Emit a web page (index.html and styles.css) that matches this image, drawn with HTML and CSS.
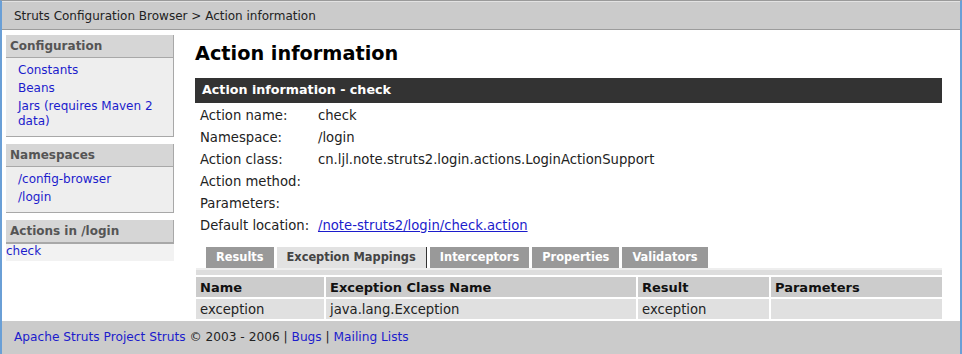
FILE: index.html
```html
<!DOCTYPE html>
<html lang="en">
<head>
  <meta charset="UTF-8" />
  <title>Action information</title>
  <link rel="stylesheet" href="styles.css">
</head>
<body>
<div class="frame">

  <!-- Breadcrumb -->
  <div class="top-bar">Struts Configuration Browser &gt; Action information</div>

  <div class="layout">
    <!-- Sidebar -->
    <div class="sidebar">
      <div class="nav-box">
        <div class="nav-title">Configuration</div>
        <ul class="nav-list">
          <li><a href="#">Constants</a></li>
          <li><a href="#">Beans</a></li>
          <li><a href="#">Jars (requires Maven 2 data)</a></li>
        </ul>
      </div>
      <div class="nav-box">
        <div class="nav-title">Namespaces</div>
        <ul class="nav-list">
          <li><a href="#">/config-browser</a></li>
          <li><a href="#">/login</a></li>
        </ul>
      </div>
      <div class="nav-box actions-box">
        <div class="nav-title">Actions in /login</div>
      </div>
      <div class="action-link"><a href="#">check</a></div>
    </div>

    <!-- Main -->
    <div class="main">
      <h2 class="page-heading">Action information</h2>
      <div class="section-bar">Action information - check</div>
      <table class="info-table">
        <tr><td class="label">Action name:</td><td>check</td></tr>
        <tr><td class="label">Namespace:</td><td>/login</td></tr>
        <tr><td class="label">Action class:</td><td>cn.ljl.note.struts2.login.actions.LoginActionSupport</td></tr>
        <tr><td class="label">Action method:</td><td></td></tr>
        <tr><td class="label">Parameters:</td><td></td></tr>
        <tr><td class="label">Default location:</td><td><a href="#" class="under">/note-struts2/login/check.action</a></td></tr>
      </table>

      <div class="tabs">
        <span class="tab">Results</span>
        <span class="tab active">Exception Mappings</span>
        <span class="tab">Interceptors</span>
        <span class="tab">Properties</span>
        <span class="tab">Validators</span>
      </div>
      <div class="tab-strip"></div>
      <table class="grid">
        <tr>
          <th class="c-name">Name</th>
          <th class="c-class">Exception Class Name</th>
          <th class="c-result">Result</th>
          <th>Parameters</th>
        </tr>
        <tr>
          <td>exception</td>
          <td>java.lang.Exception</td>
          <td>exception</td>
          <td></td>
        </tr>
      </table>
    </div>
  </div>

  <!-- Footer -->
  <div class="footer">
    <a href="#">Apache Struts Project Struts</a> &copy; 2003 - 2006 | <a href="#">Bugs</a> | <a href="#">Mailing Lists</a>
  </div>
</div>
</body>
</html>
```

FILE: styles.css
```css
/* Basic Reset */
* {
  margin: 0;
  padding: 0;
  box-sizing: border-box;
}
body {
  background-color: #fff;
  font-family: "DejaVu Sans", Verdana, sans-serif;
  font-size: 12px;
  color: #222;
}
a {
  color: #1c1ccc;
  text-decoration: none;
}
a.under {
  text-decoration: underline;
}
/* Window frame */
.frame {
  height: 354px;
  border-left: 2px solid #6a9fd6;
  border-right: 2px solid #6a9fd6;
  border-top: 1px solid #9a9a9a;
  display: flex;
  flex-direction: column;
}
/* Breadcrumb bar */
.top-bar {
  background-color: #cbcbcb;
  border-top: 1px solid #e2e2e2;
  border-bottom: 1px solid #9c9c9c;
  height: 29px;
  padding: 7px 0 0 12px;
  color: #222;
}
.layout {
  display: flex;
  flex: 1;
  padding: 4px 18px 0 4px;
}
/* Sidebar */
.sidebar {
  width: 168px;
  flex-shrink: 0;
  padding-top: 1px;
}
.nav-box {
  background-color: #eee;
  border-right: 1px solid #a8a8a8;
  border-bottom: 1px solid #a8a8a8;
  margin-bottom: 7px;
}
.nav-title {
  background-color: #d6d6d6;
  border-bottom: 1px solid #a8a8a8;
  color: #555;
  font-weight: bold;
  font-size: 12px;
  height: 23px;
  padding: 4px 0 0 4px;
}
.nav-list {
  list-style: none;
  padding: 5px 4px 4px 12px;
}
.nav-list li {
  line-height: 15px;
  margin-bottom: 3px;
}
.actions-box {
  margin-bottom: 0;
}
.action-link {
  background-color: #f2f2f2;
  height: 17px;
  padding: 0;
}
/* Main column */
.main {
  flex: 1;
  padding-left: 21px;
  font-size: 13.2px;
}
.page-heading {
  font-size: 19.3px;
  color: #000;
  margin: 8px 0 9px;
  height: 27px;
}
.section-bar {
  background-color: #333;
  color: #fff;
  font-weight: bold;
  font-size: 12.7px;
  height: 25px;
  padding: 4px 0 0 7px;
}
.info-table {
  border-collapse: collapse;
  margin: 1px 0 0 5px;
}
.info-table td {
  height: 22px;
  vertical-align: middle;
  padding: 0;
  white-space: nowrap;
}
.info-table td.label {
  width: 118px;
}
/* Tabs */
.tabs {
  display: flex;
  gap: 3px;
  margin: 11px 0 0 11px;
  font-size: 11.4px;
}
.tab {
  background-color: #999;
  color: #fff;
  font-weight: bold;
  height: 21px;
  padding: 3px 10px 0;
}
.tab.active {
  background-color: #e2e2e2;
  color: #444;
  border-right: 1px solid #333;
}
.tab-strip {
  height: 7px;
  margin-left: 1px;
  background-color: #ddd;
  border-top: 2px solid #eee;
}
.grid {
  width: calc(100% - 1px);
  margin-left: 1px;
  border-collapse: separate;
  border-spacing: 0 2px;
  margin-top: 0;
}
.grid th,
.grid td {
  text-align: left;
  height: 20px;
  padding: 0 4px;
  border-right: 2px solid #fff;
}
.grid th:last-child,
.grid td:last-child {
  border-right: none;
}
.grid th {
  background-color: #ccc;
  color: #111;
  font-size: 13px;
}
.grid td {
  background-color: #e0e0e0;
}
.c-name { width: 130px; }
.c-class { width: 312px; }
.c-result { width: 133px; }
/* Footer */
.footer {
  background-color: #cbcbcb;
  height: 33px;
  padding: 9px 0 0 12px;
  font-size: 12.2px;
  color: #222;
}
```
